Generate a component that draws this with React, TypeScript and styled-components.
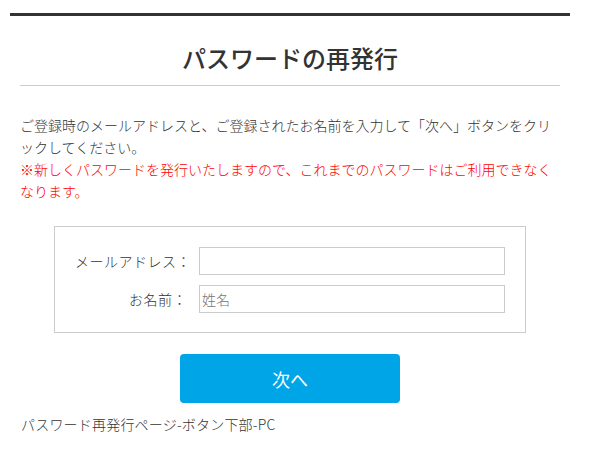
import styled, { createGlobalStyle } from "styled-components";

const GlobalStyle = createGlobalStyle`
  * {
    box-sizing: border-box;
  }
  body {
    margin: 0;
    background: #fff;
    font-family: "Noto Sans CJK JP", "Noto Sans", sans-serif;
    font-weight: 300;
    color: #333;
  }
`;

const Page = styled.div`
  width: 560px;
  margin-left: 10px;
  padding-top: 13px;
`;
const TopBar = styled.div`
  height: 3px;
  background-color: #333;
`;
const Title = styled.h1`
  margin: 24px 0 0;
  font-size: 24px;
  line-height: 36px;
  font-weight: 500;
  text-align: center;
  color: #333;
`;
const Divider = styled.hr`
  margin: 9px 10px 0;
  border: none;
  border-top: 1px solid #ccc;
`;
const Intro = styled.div`
  margin-top: 28px;
  padding: 0 10px;
  font-size: 14px;
  line-height: 22px;
`;
const Note = styled.p<{ warn?: boolean }>`
  margin: 0;
  color: ${(props) => (props.warn ? "#ff0000" : "#333")};
`;
const FormBox = styled.div`
  margin: 24px 44px 0;
  padding: 20px 20px 19px;
  border: 1px solid #ccc;
  display: grid;
  grid-template-columns: 112px 1fr;
  column-gap: 12px;
  row-gap: 10px;
  align-items: center;
`;
const Label = styled.label`
  font-size: 14px;
  text-align: right;
  white-space: nowrap;
  letter-spacing: 0.5px;
  color: #333;
`;
const Input = styled.input`
  height: 28px;
  width: 100%;
  border: 1px solid #ccc;
  padding: 0 2px;
  font-family: inherit;
  font-weight: 300;
  font-size: 14px;
  color: #333;
  outline: none;
  &::placeholder {
    color: #757575;
  }
`;
const Actions = styled.div`
  display: flex;
  justify-content: center;
  margin-top: 21px;
`;
const NextButton = styled.button`
  width: 220px;
  height: 49px;
  border: none;
  border-radius: 4px;
  background-color: #00a5e8;
  color: #fff;
  font-family: inherit;
  font-weight: 400;
  font-size: 18px;
  cursor: pointer;
`;
const Footer = styled.div`
  margin-top: 10px;
  padding: 0 11px;
  font-size: 14px;
  line-height: 22px;
  letter-spacing: 0.2px;
  color: #333;
`;

function App() {
  return (
    <>
      <GlobalStyle />
      <Page>
        <TopBar />
        <Title>パスワードの再発行</Title>
        <Divider />
        <Intro>
          <Note>
            ご登録時のメールアドレスと、ご登録されたお名前を入力して「次へ」ボタンをクリックしてください。
          </Note>
          <Note warn>
            ※新しくパスワードを発行いたしますので、これまでのパスワードはご利用できなくなります。
          </Note>
        </Intro>
        <FormBox>
          <Label htmlFor="mail">メールアドレス：</Label>
          <Input id="mail" type="email" />
          <Label htmlFor="name">お名前：</Label>
          <Input id="name" type="text" placeholder="姓名" />
        </FormBox>
        <Actions>
          <NextButton>次へ</NextButton>
        </Actions>
        <Footer>パスワード再発行ページ-ボタン下部-PC</Footer>
      </Page>
    </>
  );
}
export default App;
